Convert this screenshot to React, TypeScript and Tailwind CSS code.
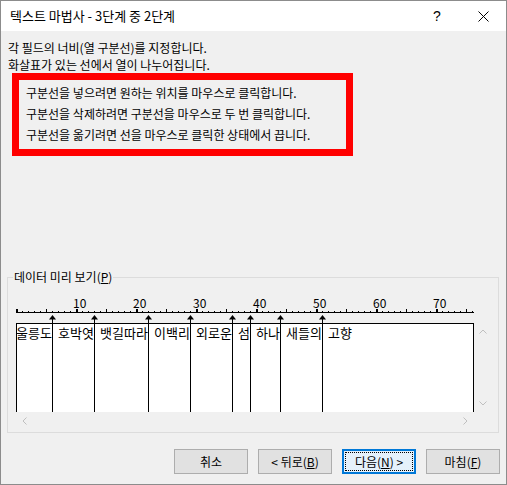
import React from "react";

const words = ["울릉도", "호박엿", "뱃길따라", "이백리", "외로운", "섬", "하나", "새들의", "고향"];
const breaks = [6, 13, 22, 29, 36, 39, 44, 51];

function Chevron({ dir }: { dir: "up" | "down" | "left" | "right" }) {
  const pts: Record<string, string> = {
    up: "0.5,4.5 4,1 7.5,4.5",
    down: "0.5,0.5 4,4 7.5,0.5",
    left: "4.5,0.5 1,4 4.5,7.5",
    right: "0.5,0.5 4,4 0.5,7.5",
  };
  const vert = dir === "up" || dir === "down";
  return (
    <svg width={vert ? 8 : 5} height={vert ? 5 : 8} viewBox={vert ? "0 0 8 5" : "0 0 5 8"}>
      <polyline points={pts[dir]} fill="none" stroke="#bfbfbf" strokeWidth="1" />
    </svg>
  );
}

function Ruler() {
  const ticks = [];
  for (let n = 0; n <= 76; n++) {
    if (n % 10 === 0) ticks.push(<rect key={n} x={6 * n} y={19} width={2} height={4} fill="#000" />);
    else if (n % 5 === 0) ticks.push(<rect key={n} x={6 * n} y={19} width={1} height={4} fill="#000" />);
    else ticks.push(<rect key={n} x={6 * n} y={21} width={1} height={2} fill="#000" />);
  }
  const nums = [];
  for (let k = 1; k <= 7; k++) {
    nums.push(
      <text key={k} x={60 * k - 3} y={17.5} fontSize={12} fill="#000" fontFamily="'Noto Sans CJK KR', sans-serif">
        {k * 10}
      </text>
    );
  }
  return (
    <svg width={475} height={33} className="block">
      <rect x={0} y={22} width={458} height={1} fill="#000" />
      {ticks}
      {nums}
    </svg>
  );
}

function Breaks() {
  return (
    <svg width={475} height={139} className="absolute left-0 top-0 pointer-events-none">
      {breaks.map((n) => (
        <g key={n}>
          <polygon points={`${6 * n + 0.5},25 ${6 * n - 3},29.5 ${6 * n + 4},29.5`} fill="#000" />
          <rect x={6 * n} y={29} width={1} height={93} fill="#000" />
        </g>
      ))}
    </svg>
  );
}

function Btn({ children, focused }: { children: React.ReactNode; focused?: boolean }) {
  if (focused) {
    return (
      <div className="w-[74px] h-[25px] bg-[#e5f1fb] border-2 border-[#0078d7] p-[1px] flex">
        <div className="flex-1 border border-dotted border-black flex items-center justify-center">{children}</div>
      </div>
    );
  }
  return (
    <div className="w-[74px] h-[25px] bg-[#e1e1e1] border border-[#adadad] flex items-center justify-center">
      {children}
    </div>
  );
}

export default function App() {
  return (
    <div className="w-[507px] h-[485px] bg-[#f0f0f0] border border-[#8c8c8c] flex flex-col text-[12px] text-black overflow-hidden font-['Noto_Sans_CJK_KR',sans-serif]">
      <div className="h-[30px] bg-white flex items-center shrink-0">
        <span className="pl-[9px] flex-1 text-[13px]">텍스트 마법사 - 3단계 중 2단계</span>
        <div className="w-[46px] h-full flex items-center justify-center text-[14px] font-['Liberation_Sans',sans-serif]">?</div>
        <div className="w-[46px] h-full flex items-center justify-center">
          <svg width="11" height="11" viewBox="0 0 11 11">
            <path d="M0.5 0.5 L10.5 10.5 M10.5 0.5 L0.5 10.5" stroke="#000" strokeWidth="1" fill="none" />
          </svg>
        </div>
      </div>

      <div className="pl-[7px] pt-[8px] leading-[17px]">
        <div>각 필드의 너비(열 구분선)를 지정합니다.</div>
        <div>화살표가 있는 선에서 열이 나누어집니다.</div>
      </div>

      <div className="ml-[11px] w-[341px] h-[83px] border-[7px] border-[#ff0000] pl-[7px] pt-[2px] leading-[21px]">
        <div>구분선을 넣으려면 원하는 위치를 마우스로 클릭합니다.</div>
        <div>구분선을 삭제하려면 구분선을 마우스로 두 번 클릭합니다.</div>
        <div>구분선을 옮기려면 선을 마우스로 클릭한 상태에서 끕니다.</div>
      </div>

      <div className="ml-[6px] mt-[114px] w-[492px]">
        <div className="flex h-[14px]">
          <div className="w-[6px] h-[7px] self-end border-l border-t border-[#dcdcdc]" />
          <div className="px-[1px] leading-[14px]">
            데이터 미리 보기(<span className="underline">P</span>)
          </div>
          <div className="flex-1 h-[7px] self-end border-r border-t border-[#dcdcdc]" />
        </div>
        <div className="border-l border-r border-b border-[#dcdcdc] pl-[8px] pt-[6px] pb-[3px]">
          <div className="relative w-[475px]">
            <Ruler />
            <div className="flex">
              <div className="w-[458px] h-[89px] bg-white border-l border-t border-r border-black overflow-hidden">
                <div className="flex whitespace-nowrap leading-[17px] text-[13px] -ml-[1px] gap-[6px]">
                  {words.map((w) => (
                    <span key={w} className="flex">
                      {Array.from(w).map((c, i) => (
                        <span key={i} className="w-[12px] flex justify-center">
                          {c}
                        </span>
                      ))}
                    </span>
                  ))}
                </div>
              </div>
              <div className="w-[17px] h-[89px] flex flex-col justify-between">
                <div className="h-[17px] flex items-center justify-center"><Chevron dir="up" /></div>
                <div className="h-[17px] flex items-center justify-center"><Chevron dir="down" /></div>
              </div>
            </div>
            <div className="h-[17px] flex">
              <div className="w-[17px] flex items-center justify-center"><Chevron dir="left" /></div>
              <div className="w-[424px]" />
              <div className="w-[17px] flex items-center justify-center"><Chevron dir="right" /></div>
            </div>
            <Breaks />
          </div>
        </div>
      </div>

      <div className="mt-[16px] flex justify-end gap-[10px] pr-[6px]">
        <Btn>취소</Btn>
        <Btn>&lt; 뒤로(<span className="underline">B</span>)</Btn>
        <Btn focused>다음(<span className="underline">N</span>) &gt;</Btn>
        <Btn>마침(<span className="underline">F</span>)</Btn>
      </div>
    </div>
  );
}
